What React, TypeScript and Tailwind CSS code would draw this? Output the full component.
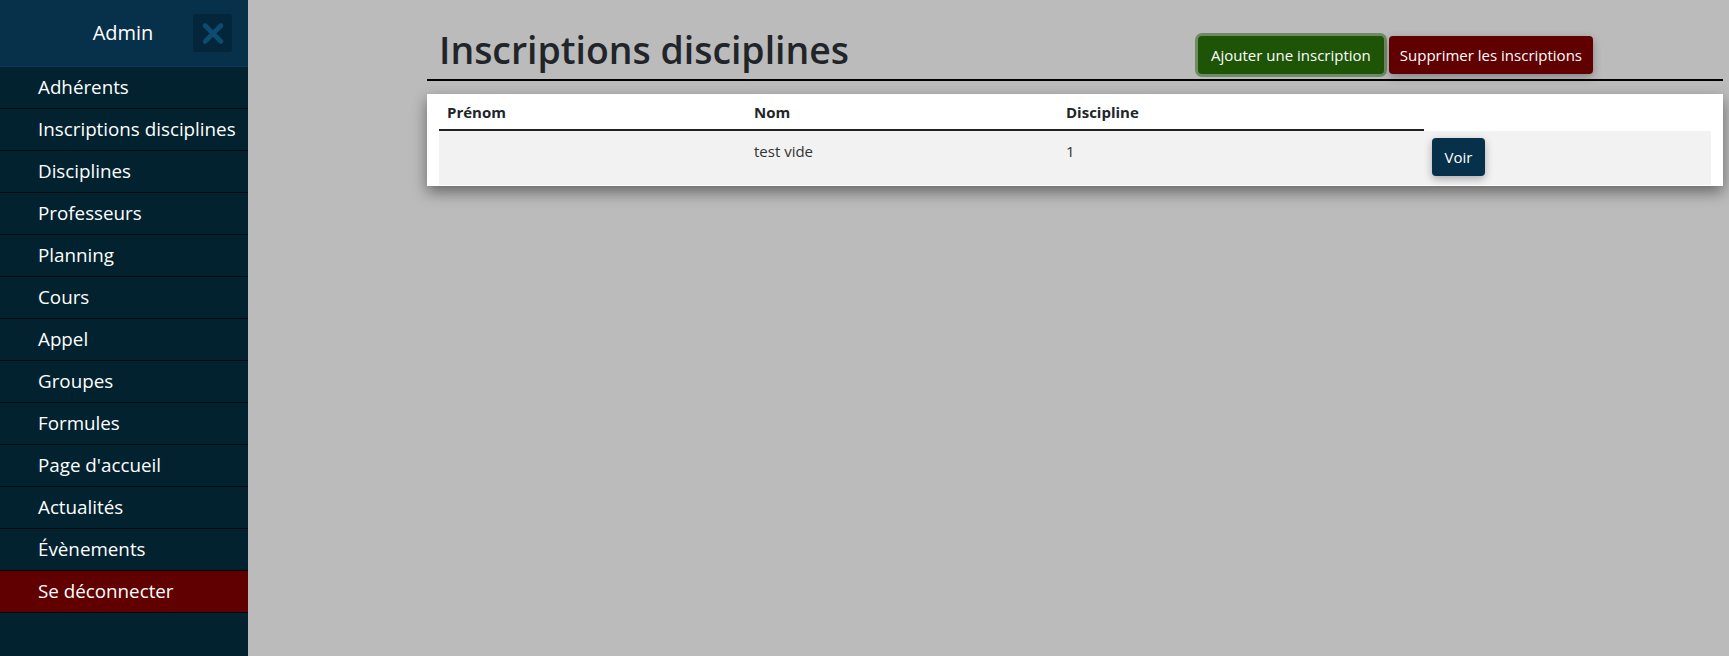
import React from "react";

const items = [
  "Adhérents",
  "Inscriptions disciplines",
  "Disciplines",
  "Professeurs",
  "Planning",
  "Cours",
  "Appel",
  "Groupes",
  "Formules",
  "Page d'accueil",
  "Actualités",
  "Évènements",
];

export default function App() {
  return (
    <div
      className="flex h-[656px] w-full bg-[#bbbbbb] overflow-hidden"
      style={{ fontFamily: '"Open Sans", "Noto Sans", sans-serif' }}
    >
      <aside className="w-[248px] shrink-0 bg-[#022230] flex flex-col">
        <div className="relative h-[67px] bg-[#07304a] border-b border-[#0b3a55] flex items-center justify-center">
          <span className="text-white text-[20px] pr-[2px]">Admin</span>
          <button className="absolute right-[16px] top-[14px] w-[39px] h-[38px] rounded-[3px] bg-[#03263a] flex items-center justify-center">
            <svg width="24" height="23" viewBox="0 0 24 23">
              <path d="M4 3.5 L20 19.5 M20 3.5 L4 19.5" stroke="#0e4b70" strokeWidth="4.6" strokeLinecap="round" />
            </svg>
          </button>
        </div>
        {items.map((t) => (
          <div
            key={t}
            className="h-[42px] border-b border-[#050a0d] flex items-center pl-[38px] text-white text-[18.8px]"
          >
            {t}
          </div>
        ))}
        <div className="h-[42px] bg-[#600000] border-b border-[#050a0d] flex items-center pl-[38px] text-white text-[18.8px]">
          Se déconnecter
        </div>
      </aside>
      <main className="flex-1 pl-[179px] pr-[6px]">
        <div className="flex items-end justify-between border-b-2 border-black h-[81px] pl-[12px] pr-[130px] pb-[5px]">
          <h1 className="text-[37.4px] leading-none text-[#212529] font-semibold pb-[6px]">Inscriptions disciplines</h1>
          <div className="flex items-center gap-[5px]">
            <button className="h-[38px] px-[13px] rounded-[4px] bg-[#1e5406] text-white text-[15px] ring-[3px] ring-[#6f8a64]">
              Ajouter une inscription
            </button>
            <button className="h-[38px] px-[11px] rounded-[4px] bg-[#600000] text-white text-[15px] shadow-[0_3px_8px_rgba(0,0,0,0.3)]">
              Supprimer les inscriptions
            </button>
          </div>
        </div>
        <div className="mt-[13px] bg-white px-[12px] pb-[1px] shadow-[0_6px_14px_rgba(0,0,0,0.45)]">
          <div className="grid grid-cols-[307px_312px_366px_1fr] text-[15px] text-[#212529]">
            <div className="h-[37px] flex items-center pl-[8px] pt-[1px] font-bold border-b-2 border-[#222]">Prénom</div>
            <div className="h-[37px] flex items-center pl-[8px] pt-[1px] font-bold border-b-2 border-[#222]">Nom</div>
            <div className="h-[37px] flex items-center pl-[8px] pt-[1px] font-bold border-b-2 border-[#222]">Discipline</div>
            <div className="h-[37px]"></div>
            <div className="h-[54px] bg-[#f2f2f2]"></div>
            <div className="h-[54px] bg-[#f2f2f2] pl-[8px] pt-[8px] leading-[24px] text-[#333]">test vide</div>
            <div className="h-[54px] bg-[#f2f2f2] pl-[8px] pt-[8px] leading-[24px] text-[#333]">1</div>
            <div className="h-[54px] bg-[#f2f2f2] pl-[8px] pt-[7px]">
              <button className="h-[38px] w-[53px] rounded-[4px] bg-[#07304a] text-white text-[15px] shadow-[0_3px_8px_rgba(0,0,0,0.3)]">
                Voir
              </button>
            </div>
          </div>
        </div>
      </main>
    </div>
  );
}
